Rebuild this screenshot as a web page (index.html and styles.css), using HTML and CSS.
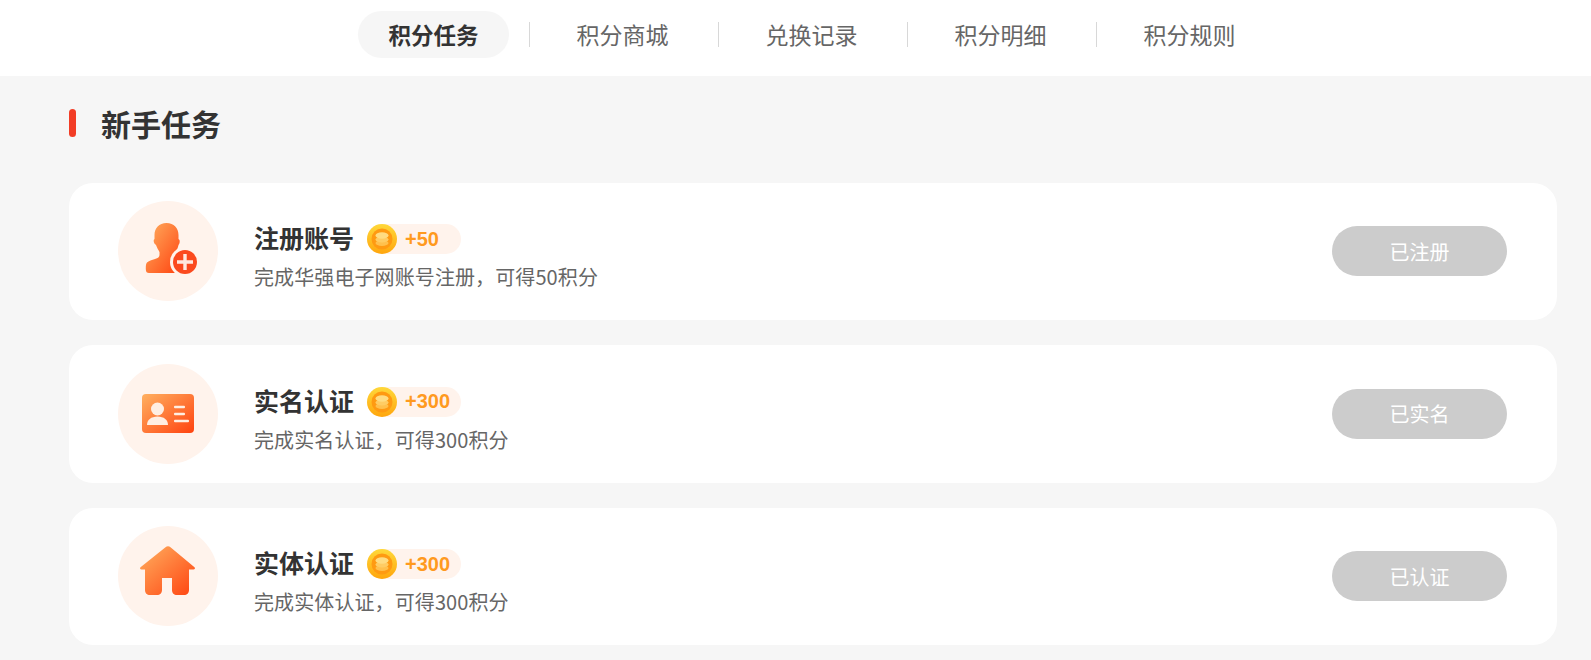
FILE: index.html
```html
<!DOCTYPE html>
<html lang="zh-CN">
<head>
    <meta charset="UTF-8" />
    <meta name="viewport" content="width=device-width, initial-scale=1.0"/>
    <title>积分任务</title>
    <link rel="stylesheet" href="styles.css">
</head>
<body>

<svg class="defs" width="0" height="0" aria-hidden="true">
    <defs>
        <linearGradient id="iconFill" x1="0" y1="0" x2="1" y2="1">
            <stop offset="0" stop-color="#ffb060"/>
            <stop offset="1" stop-color="#ff4310"/>
        </linearGradient>
        <linearGradient id="coinRim" x1="0" y1="0" x2="0" y2="1">
            <stop offset="0" stop-color="#ffd83a"/>
            <stop offset="1" stop-color="#ffa60d"/>
        </linearGradient>
        <g id="coin">
            <circle cx="15" cy="15" r="15" fill="url(#coinRim)"/>
            <circle cx="15" cy="15" r="10.5" fill="#ff9a12"/>
            <ellipse cx="15" cy="19" rx="6.5" ry="3" fill="#ffc04d"/>
            <ellipse cx="15" cy="15.5" rx="6.5" ry="3" fill="#ffcc63"/>
            <ellipse cx="15" cy="11.5" rx="6.5" ry="3.2" fill="#ffdc82"/>
        </g>
    </defs>
</svg>

<nav class="tabs">
    <a class="tab active">积分任务</a>
    <span class="tab-line"></span>
    <a class="tab">积分商城</a>
    <span class="tab-line"></span>
    <a class="tab">兑换记录</a>
    <span class="tab-line"></span>
    <a class="tab">积分明细</a>
    <span class="tab-line"></span>
    <a class="tab">积分规则</a>
</nav>

<main class="content">
    <h2 class="section-title">新手任务</h2>

    <div class="task">
        <div class="task-icon">
            <svg viewBox="0 0 100 100" width="100" height="100">
                <path fill="url(#iconFill)" d="M48.500 22C41 22 36.500 27 36.500 34V38C35.500 38.500 35.500 40 36 41.500C36.500 43 37.500 43.500 38 44C39 47 40.500 49 41.500 51V54C41.500 56 40 57 37 58C34 59 30.500 60 29 61.500C28 62.500 27.800 64 27.800 68C27.800 71 29 72 31 72H60L56 52L58 50C59.500 48 60 46 60.500 44C61.500 43 62 41 61.500 39L60.500 38V34C60.500 27 56 22 48.500 22Z"/>
                <circle cx="67" cy="61" r="15" fill="#fff3ec"/>
                <circle cx="67" cy="61" r="12" fill="#fb4a1e"/>
                <path fill="#ffe9df" d="M65.300 53h3.400v6.300H75v3.400h-6.300V69h-3.400v-6.300H59v-3.400h6.300z"/>
            </svg>
        </div>
        <div class="task-info">
            <div class="task-head">
                <span class="task-name">注册账号</span>
                <span class="points">
                    <svg class="coin" viewBox="0 0 30 30" width="30" height="30"><use href="#coin"/></svg>
                    <b>+50</b>
                </span>
            </div>
            <p class="task-desc">完成华强电子网账号注册，可得50积分</p>
        </div>
        <button class="task-btn">已注册</button>
    </div>

    <div class="task">
        <div class="task-icon">
            <svg viewBox="0 0 100 100" width="100" height="100">
                <rect x="24" y="30" width="52" height="39" rx="4" fill="url(#iconFill)"/>
                <circle cx="39.500" cy="45" r="6.500" fill="#ffeee2"/>
                <path fill="#ffeee2" d="M29 61c0-5 4-8.500 10.500-8.500S50 56 50 61z"/>
                <rect x="56" y="41.800" width="11" height="2.400" rx="1" fill="#ffeee2"/>
                <rect x="56" y="48.800" width="11" height="2.400" rx="1" fill="#ffeee2"/>
                <rect x="56" y="55.800" width="15" height="2.400" rx="1" fill="#ffeee2"/>
            </svg>
        </div>
        <div class="task-info">
            <div class="task-head">
                <span class="task-name">实名认证</span>
                <span class="points">
                    <svg class="coin" viewBox="0 0 30 30" width="30" height="30"><use href="#coin"/></svg>
                    <b>+300</b>
                </span>
            </div>
            <p class="task-desc">完成实名认证，可得300积分</p>
        </div>
        <button class="task-btn">已实名</button>
    </div>

    <div class="task">
        <div class="task-icon">
            <svg viewBox="0 0 100 100" width="100" height="100">
                <path fill="url(#iconFill)" d="M47.500 21.200c1.500-1.200 3.500-1.200 5 0l24 20c1 1 .3 2.300-1 2.300H71V64c0 3-2 5-5 5h-7c-3 0-5-2-5-5V52H44v12c0 3-2 5-5 5h-7c-3 0-5-2-5-5V43.500h-3.500c-1.300 0-2-1.300-1-2.300z"/>
            </svg>
        </div>
        <div class="task-info">
            <div class="task-head">
                <span class="task-name">实体认证</span>
                <span class="points">
                    <svg class="coin" viewBox="0 0 30 30" width="30" height="30"><use href="#coin"/></svg>
                    <b>+300</b>
                </span>
            </div>
            <p class="task-desc">完成实体认证，可得300积分</p>
        </div>
        <button class="task-btn">已认证</button>
    </div>
</main>

</body>
</html>
```

FILE: styles.css
```css
* {
    box-sizing: border-box;
}

body {
    margin: 0;
    background-color: #f6f6f6;
    font-family: "Noto Sans CJK SC", "Liberation Sans", sans-serif;
    overflow: hidden;
}

.defs {
    display: block;
    height: 0;
}

.tabs {
    display: flex;
    align-items: center;
    justify-content: center;
    height: 76px;
    padding: 0 0 7px 32px;
    background-color: #ffffff;
}

.tab {
    width: 151px;
    height: 47px;
    line-height: 47px;
    text-align: center;
    font-size: 23px;
    color: #666666;
    border-radius: 24px;
}

.tab.active {
    background-color: #f6f6f6;
    color: #333333;
    font-size: 22.5px;
    font-weight: 700;
}

.tab-line {
    width: 1px;
    height: 25px;
    margin: 0 17px 0 20px;
    background-color: #d8d8d8;
}

.content {
    padding: 0 34px 0 69px;
}

.section-title {
    display: flex;
    align-items: center;
    gap: 25px;
    height: 106.75px;
    margin: 0;
    padding-bottom: 13px;
    font-size: 30px;
    font-weight: 700;
    color: #333333;
}

.section-title::before {
    content: "";
    width: 7px;
    height: 28px;
    border-radius: 4px;
    background-color: #f23d26;
}

.task {
    display: flex;
    align-items: center;
    height: 137.5px;
    margin-bottom: 25px;
    padding: 0 50px 1px 49px;
    background-color: #ffffff;
    border-radius: 24px;
}

.task-icon {
    width: 100px;
    height: 100px;
    margin-right: 36px;
    border-radius: 50%;
    background-color: #fff3ec;
}

.task-icon svg {
    display: block;
}

.task-info {
    flex: 1;
    padding-top: 14px;
}

.task-head {
    display: flex;
    align-items: center;
    gap: 13px;
    height: 30px;
}

.task-name {
    padding-bottom: 4px;
    font-size: 25px;
    font-weight: 700;
    color: #333333;
}

.points {
    display: flex;
    align-items: center;
    width: 94px;
    height: 30px;
    border-radius: 15px;
    background-color: #fff3ec;
}

.coin {
    flex: none;
}

.points b {
    margin-left: 8px;
    font-family: "Liberation Sans", sans-serif;
    font-size: 20px;
    font-weight: 700;
    color: #ff9a1f;
}

.task-desc {
    margin: 8px 0 0;
    font-size: 20px;
    line-height: 30px;
    letter-spacing: 0.1px;
    color: #666666;
}

.task-btn {
    width: 175px;
    height: 50px;
    border: 0;
    border-radius: 25px;
    background-color: #cccccc;
    color: #ffffff;
    font-family: inherit;
    font-size: 20px;
}
```
